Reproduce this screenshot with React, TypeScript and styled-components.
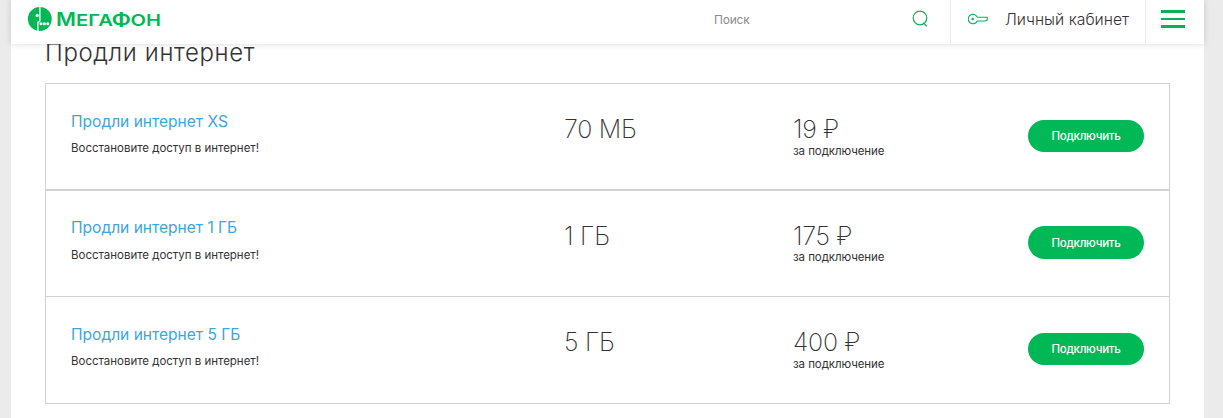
import React from 'react';
import styled, { createGlobalStyle } from 'styled-components';

const GREEN = '#00b956';

const GlobalStyle = createGlobalStyle`
  * { box-sizing: border-box; }
  body {
    margin: 0;
    background: #ebebeb;
    font-family: Inter, "Liberation Sans", sans-serif;
    color: #333;
    overflow: hidden;
  }
`;

const Sheet = styled.div`
  width: 1193px;
  height: 418px;
  margin-left: 11px;
  background: #fff;
`;

const Header = styled.header`
  position: relative;
  z-index: 1;
  display: flex;
  height: 44px;
  background: #fff;
  box-shadow: 0 0 6px rgba(0, 0, 0, 0.16);
`;

const LogoArea = styled.a`
  width: 703px;
  padding: 7px 0 0 16px;
`;

const Search = styled.div`
  display: flex;
  width: 236px;
  padding-right: 21px;
  justify-content: space-between;
`;

const SearchHint = styled.span`
  font-size: 12px;
  line-height: 40px;
  letter-spacing: -0.2px;
  color: #8c8c8c;
`;

const SearchIcon = styled.svg`
  margin-top: 9px;
`;

const Cabinet = styled.a`
  display: flex;
  width: 195px;
  padding-left: 17px;
  border-left: 1px solid #ececec;
`;

const KeyIcon = styled.svg`
  margin: 12px 17px 0 0;
`;

const CabinetLabel = styled.span`
  font-size: 15.7px;
  font-weight: 300;
  line-height: 39px;
  white-space: nowrap;
`;

const MenuButton = styled.div`
  display: flex;
  flex: 1;
  flex-direction: column;
  gap: 5px;
  padding: 10px 0 0 15px;
  border-left: 1px solid #ececec;
`;

const MenuBar = styled.span`
  width: 24px;
  height: 2.5px;
  background: #0fac5c;
`;

const Content = styled.main`
  padding: 0 34px;
`;

const Title = styled.h1`
  height: 39px;
  margin: 0;
  font-size: 24px;
  font-weight: 300;
  line-height: 18px;
  letter-spacing: 0.62px;
  white-space: nowrap;
`;

const Options = styled.div`
  border: 1px solid #d2d2d2;
  height: 321px;
`;

const Option = styled.section<{ $line: number }>`
  display: grid;
  grid-template-columns: 493px 229px 235px 116px;
  height: 106.6px;
  padding-left: 25px;
  border-bottom: ${({ $line }) => $line}px solid #d2d2d2;
`;

const OptionName = styled.a`
  display: block;
  padding-top: 26.7px;
  font-size: 15.6px;
  line-height: 22px;
  font-weight: 400;
  letter-spacing: -0.03px;
  color: #3fa5de;
  white-space: nowrap;
`;

const Note = styled.div`
  margin-top: 7.6px;
  font-size: 11.5px;
  line-height: 16px;
  letter-spacing: -0.02px;
  white-space: nowrap;
`;

const PriceNote = styled(Note)`
  margin-top: -1.3px;
  letter-spacing: -0.08px;
`;

const Amount = styled.div`
  padding-top: 30px;
  font-size: 25px;
  font-weight: 200;
  line-height: 30px;
  letter-spacing: -0.25px;
  white-space: nowrap;
`;

const Connect = styled.button`
  width: 116px;
  height: 32.5px;
  margin: 35.8px 0 0;
  padding: 0;
  border: 0;
  border-radius: 17px;
  background: ${GREEN};
  color: #fff;
  font: 500 11.5px Inter, sans-serif;
  letter-spacing: -0.28px;
`;

const options = [
  { name: 'Продли интернет XS', volume: '70 МБ', price: '19 ₽', line: 2 },
  { name: 'Продли интернет 1 ГБ', volume: '1 ГБ', price: '175 ₽', line: 1 },
  { name: 'Продли интернет 5 ГБ', volume: '5 ГБ', price: '400 ₽', line: 0 },
];

const Logo = () => (
  <svg width="136" height="25" viewBox="0 0 136 25" role="img">
    <circle cx="12.8" cy="12" r="11.9" fill={GREEN} />
    <path d="M12.9 0V13.5Q12.9 15.2 11.3 15.2H10.9V24.5" fill="none" stroke="#fff" strokeWidth="1.3" />
    <circle cx="10.2" cy="8.4" r="1.6" fill="#fff" />
    <circle cx="14" cy="16.7" r="1.5" fill="#fff" />
    <circle cx="17.4" cy="16.7" r="1.5" fill="#fff" />
    <circle cx="20.8" cy="16.7" r="1.5" fill="#fff" />
    <g fill={GREEN} fontFamily="Inter, sans-serif" fontWeight="600">
      <text x="29" y="18.6" fontSize="18.5" textLength="20" lengthAdjust="spacingAndGlyphs">М</text>
      <text x="49" y="18.6" fontSize="16" textLength="37" lengthAdjust="spacingAndGlyphs">ЕГА</text>
      <text x="84.5" y="18.6" fontSize="18.5" textLength="19.5" lengthAdjust="spacingAndGlyphs">Ф</text>
      <text x="103.5" y="18.6" fontSize="16" textLength="30.5" lengthAdjust="spacingAndGlyphs">ОН</text>
    </g>
  </svg>
);

export default function App() {
  return (
    <>
      <GlobalStyle />
      <Sheet>
        <Header>
          <LogoArea><Logo /></LogoArea>
          <Search>
            <SearchHint>Поиск</SearchHint>
            <SearchIcon width="18" height="20" viewBox="0 0 18 20" fill="none" stroke="#0fac5c" strokeWidth="1.2">
              <circle cx="9" cy="9" r="6.8" />
              <path d="M12.2 13.6L15.8 17.4" />
            </SearchIcon>
          </Search>
          <Cabinet>
            <KeyIcon width="20" height="14" viewBox="0 0 20 14" fill="none" stroke="#0fac5c" strokeWidth="1.1">
              <path d="M9.2 5.2A4.7 4.7 0 1 0 9.2 9H17L19.2 8V5.2Z" strokeLinejoin="round" />
              <circle cx="4.7" cy="7" r="0.7" fill="#0fac5c" />
            </KeyIcon>
            <CabinetLabel>Личный кабинет</CabinetLabel>
          </Cabinet>
          <MenuButton>
            <MenuBar />
            <MenuBar />
            <MenuBar />
          </MenuButton>
        </Header>
        <Content>
          <Title>Продли интернет</Title>
          <Options>
            {options.map((o) => (
              <Option key={o.name} $line={o.line}>
                <div>
                  <OptionName>{o.name}</OptionName>
                  <Note>Восстановите доступ в интернет!</Note>
                </div>
                <Amount>{o.volume}</Amount>
                <div>
                  <Amount>{o.price}</Amount>
                  <PriceNote>за подключение</PriceNote>
                </div>
                <Connect>Подключить</Connect>
              </Option>
            ))}
          </Options>
        </Content>
      </Sheet>
    </>
  );
}
